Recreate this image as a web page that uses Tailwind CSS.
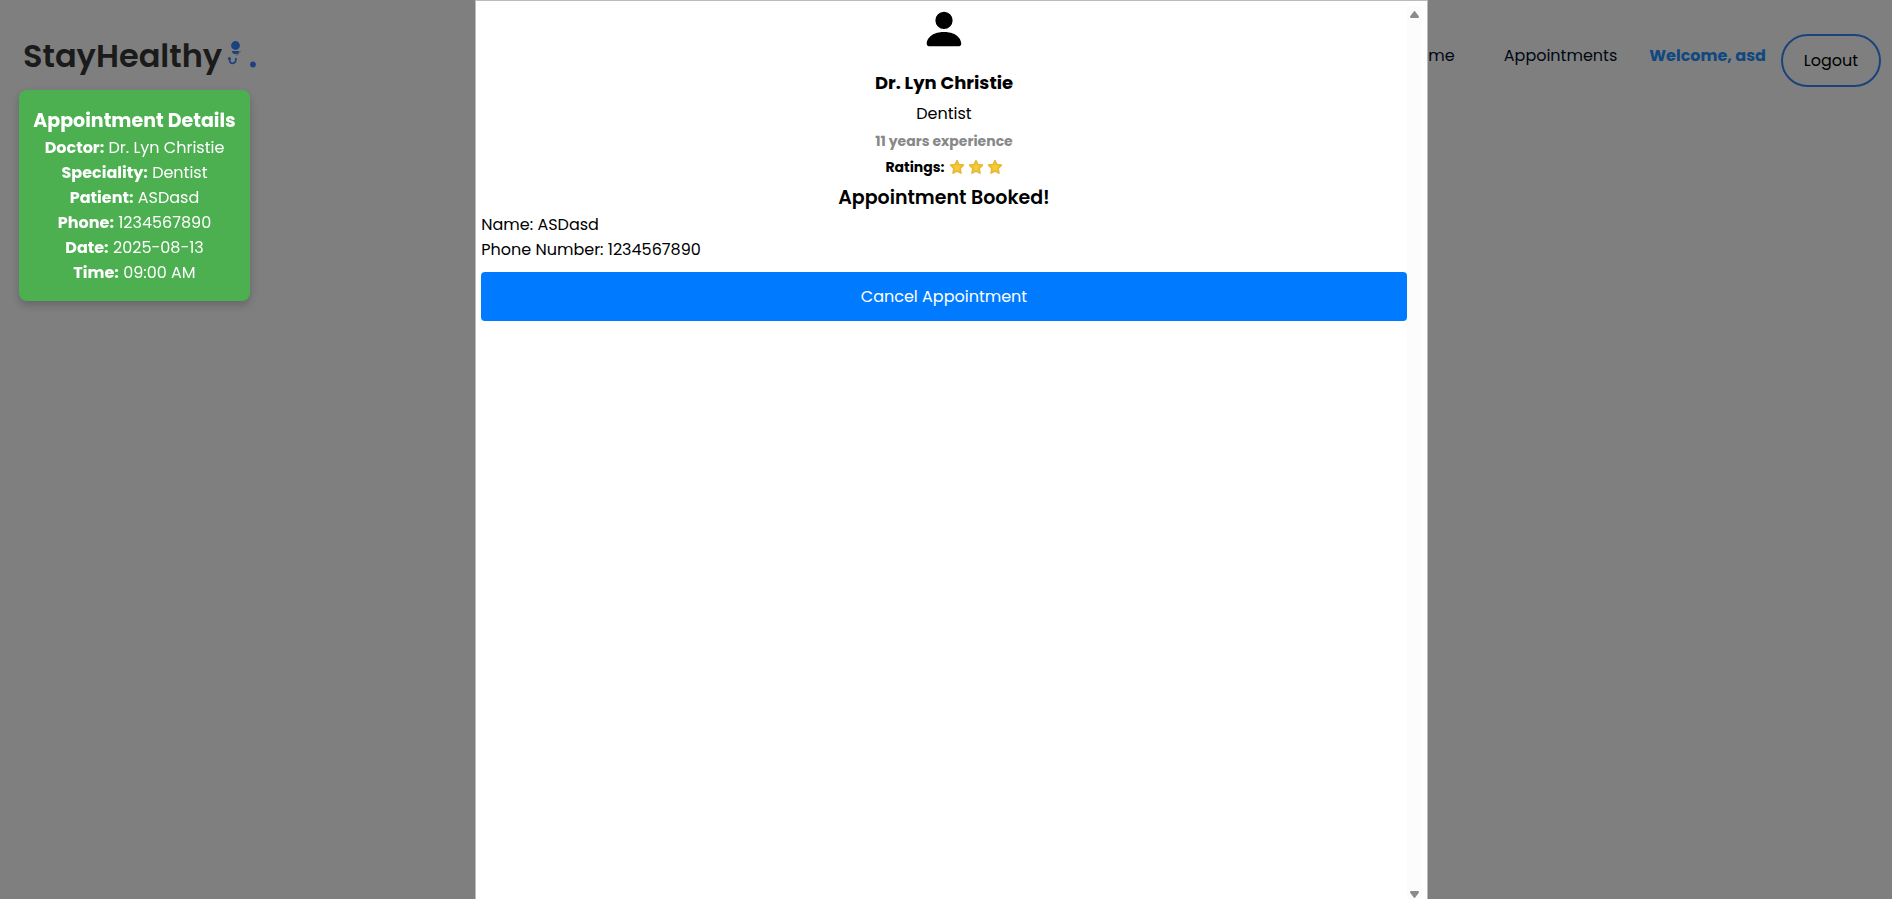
<!DOCTYPE html>
<html lang="en">
<head>
<meta charset="utf-8">
<meta name="viewport" content="width=device-width, initial-scale=1">
<title>StayHealthy</title>
<script src="https://cdn.jsdelivr.net/npm/@tailwindcss/browser@4"></script>
</head>
<body class="min-h-screen overflow-hidden bg-white font-[Poppins,Inter,sans-serif] text-base text-black">
  <header class="flex items-start justify-between pt-[34px] pr-[11px] pl-[23px]">
    <a href="#" class="flex text-[32px] leading-[44px] font-semibold text-[#363636]">
      StayHealthy
      <svg class="mt-[5px] ml-1 h-[28px] w-4" viewBox="0 0 16 28" fill="#3685fb" aria-hidden="true">
        <circle cx="9.500" cy="6.500" r="4.400"/>
        <path d="M5.800 12h7.600c-.3 2-1.600 3.200-3.800 3.200S6 14 5.800 12z"/>
        <path d="M14.500 12.200l-3.800 4.600" fill="none" stroke="#3685fb" stroke-width=".8" stroke-dasharray="1.500 .7"/>
        <path d="M3.600 20v.8c0 2.600 1.300 3.600 3 3.600 2.600 0 3.400-2 3.400-5.400" fill="none" stroke="#3685fb" stroke-width="1.700"/>
        <circle cx="3.400" cy="19.600" r="1.600"/>
      </svg>
      <svg class="mt-6 ml-[6px] size-[10px]" viewBox="0 0 10 10" fill="#3685fb" aria-hidden="true"><circle cx="5" cy="6.500" r="2.900"/></svg>
    </a>
    <nav class="flex items-start text-[#000f2e]">
      <a href="#" class="mt-[9px] mr-[49px] leading-[25px]">Home</a>
      <a href="#" class="mt-[9px] mr-8 leading-[25px]">Appointments</a>
      <span class="mt-[9px] mr-[15px] leading-[25px] font-bold text-[#2190ff]">Welcome, asd</span>
      <button type="button" class="h-[53px] w-[100px] rounded-full border-2 border-[#3685fb] text-black">Logout</button>
    </nav>
  </header>

  <section class="relative z-20 mt-[3px] ml-[19px] w-[231px] rounded-lg bg-[#4caf50] py-4 text-center leading-[25px] whitespace-nowrap text-white shadow-[0_4px_8px_rgba(0,0,0,0.2)]">
    <h2 class="text-[19px] leading-[29px] font-bold">Appointment Details</h2>
    <p><strong>Doctor:</strong> Dr. Lyn Christie</p>
    <p><strong>Speciality:</strong> Dentist</p>
    <p><strong>Patient:</strong> ASDasd</p>
    <p><strong>Phone:</strong> 1234567890</p>
    <p><strong>Date:</strong> 2025-08-13</p>
    <p><strong>Time:</strong> 09:00 AM</p>
  </section>

  <div class="fixed inset-0 z-10 flex justify-center overflow-hidden bg-black/50 pl-[11px]">
    <div role="dialog" aria-modal="true" aria-labelledby="doctor" class="flex h-[calc(100%+10px)] w-[calc(50%+12px)] shrink-0 border border-[#bbb] bg-white p-[5px]">
      <div class="min-w-0 flex-1">
        <div class="flex flex-col items-center text-center">
          <svg class="size-[46px]" viewBox="0 0 16 16" fill="black" aria-hidden="true"><path d="M3 14s-1 0-1-1 1-4 6-4 6 3 6 4-1 1-1 1zm5-6a3 3 0 1 0 0-6 3 3 0 0 0 0 6"/></svg>
          <h2 id="doctor" class="mt-[17px] text-[18px] leading-[28px] font-bold">Dr. Lyn Christie</h2>
          <p class="mt-1 leading-[25px]">Dentist</p>
          <p class="mt-1 text-sm leading-[22px] font-bold text-[#888]">11 years experience</p>
          <p class="mt-1 flex items-center gap-1 text-sm leading-[22px] font-bold">Ratings:
            <span class="flex gap-[3px]" role="img" aria-label="3 stars">
              <svg class="size-4" viewBox="0 0 15 15"><path d="M7.500 1.600l1.700 3.600 4.300.6-3.100 3 .8 4.400-3.700-2-3.700 2 .8-4.400-3.100-3 4.300-.6z" fill="#f5cb35" stroke="#e8b936" stroke-width="1.600" stroke-linejoin="round"/></svg>
              <svg class="size-4" viewBox="0 0 15 15"><path d="M7.500 1.600l1.700 3.600 4.300.6-3.100 3 .8 4.400-3.700-2-3.700 2 .8-4.400-3.100-3 4.300-.6z" fill="#f5cb35" stroke="#e8b936" stroke-width="1.600" stroke-linejoin="round"/></svg>
              <svg class="size-4" viewBox="0 0 15 15"><path d="M7.500 1.600l1.700 3.600 4.300.6-3.100 3 .8 4.400-3.700-2-3.700 2 .8-4.400-3.100-3 4.300-.6z" fill="#f5cb35" stroke="#e8b936" stroke-width="1.600" stroke-linejoin="round"/></svg>
            </span>
          </p>
          <h3 class="mt-[6px] text-[19px] leading-[28px] font-semibold">Appointment Booked!</h3>
        </div>
        <p class="leading-[25px]">Name: ASDasd</p>
        <p class="leading-[25px]">Phone Number: 1234567890</p>
        <button type="button" class="mt-[10px] h-[49px] w-full rounded bg-[#007bff] text-white">Cancel Appointment</button>
      </div>
      <div class="flex w-[15px] shrink-0 flex-col items-center justify-between bg-[#fcfcfc] py-[5px]" aria-hidden="true">
        <svg class="h-[7px] w-[9px]" viewBox="0 0 9 7" fill="#8b8b8b"><path d="M3.600.7Q4.500-.5 5.400.7L8.800 5.300Q9.300 7 8 7H1Q-.3 7 .2 5.300z"/></svg>
        <svg class="h-[7px] w-[9px]" viewBox="0 0 9 7" fill="#8b8b8b"><path d="M3.600 6.300Q4.500 7.500 5.400 6.300L8.800 1.700Q9.300 0 8 0H1Q-.3 0 .2 1.700z"/></svg>
      </div>
    </div>
  </div>
</body>
</html>
